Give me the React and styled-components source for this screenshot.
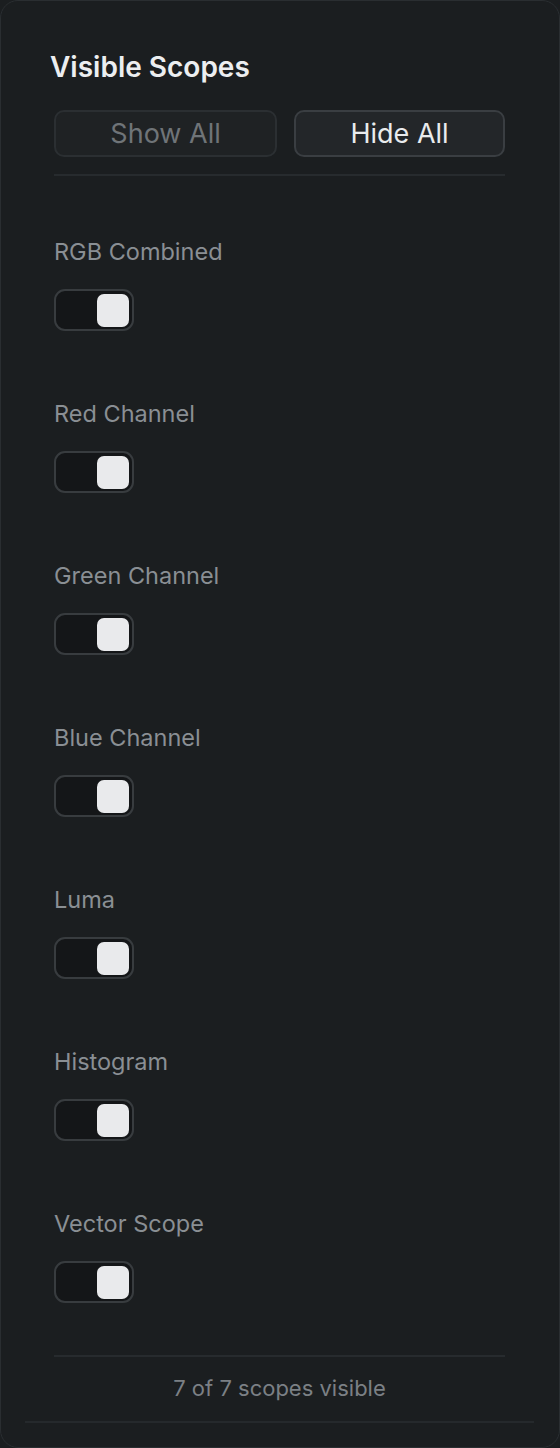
import React, { useState } from 'react';
import styled, { createGlobalStyle } from 'styled-components';

const GlobalStyle = createGlobalStyle`
  * { box-sizing: border-box; }
  html, body { margin: 0; padding: 0; background: #1b1e20; }
  body { font-family: Inter, "Noto Sans", "Liberation Sans", sans-serif; }
`;

const Panel = styled.div`
  width: 560px;
  height: 1448px;
  background: #1b1e20;
  border: 1px solid #2a2e31;
  border-radius: 18px;
  padding: 0 25px 0 24px;
  display: flex;
  flex-direction: column;
`;

const Section = styled.div`
  padding: 48px 29px 19px;
  border-bottom: 2px solid #25292c;
`;

const Title = styled.h2`
  margin: 0 0 25px -4px;
  font-size: 28px;
  line-height: 36px;
  font-weight: 600;
  color: #eceef0;
`;

const ButtonRow = styled.div`
  display: flex;
  gap: 17px;
  padding-bottom: 17px;
  border-bottom: 2px solid #272b2e;
`;

const ActionButton = styled.button`
  flex: 1 1 auto;
  height: 47px;
  padding: 0;
  border-radius: 10px;
  font-family: inherit;
  font-size: 27px;
  font-weight: 400;
  cursor: pointer;
  background: ${p => (p.$muted ? '#1f2224' : '#232629')};
  border: 2px solid ${p => (p.$muted ? '#2b2f32' : '#3a3e42')};
  color: ${p => (p.$muted ? '#6f7478' : '#e9ebed')};
`;

const List = styled.div`
  display: flex;
  flex-direction: column;
  gap: 67px;
  padding: 60px 0 52px;
  border-bottom: 2px solid #272b2e;
`;

const Item = styled.div`
  display: flex;
  flex-direction: column;
  align-items: flex-start;
  gap: 21px;
`;

const Label = styled.div`
  font-size: 23.5px;
  line-height: 32px;
  color: #8a8f94;
`;

const Track = styled.button`
  width: 80px;
  height: 42px;
  padding: 0 3px;
  border-radius: 11px;
  border: 2px solid #383c3f;
  background: #141618;
  display: flex;
  align-items: center;
  justify-content: ${p => (p.$on ? 'flex-end' : 'flex-start')};
  cursor: pointer;
`;

const Knob = styled.span`
  width: 32px;
  height: 33px;
  border-radius: 7px;
  background: ${p => (p.$on ? '#e9eaec' : '#5a5e62')};
`;

const Footer = styled.div`
  padding-top: 17px;
  text-align: center;
  font-size: 22px;
  line-height: 28px;
  color: #7b8085;
`;

const scopes = [
  'RGB Combined',
  'Red Channel',
  'Green Channel',
  'Blue Channel',
  'Luma',
  'Histogram',
  'Vector Scope',
];

export default function App() {
  const [visible, setVisible] = useState(() => scopes.map(() => true));
  const count = visible.filter(Boolean).length;

  const toggle = i => setVisible(v => v.map((on, j) => (j === i ? !on : on)));

  return (
    <>
      <GlobalStyle />
      <Panel>
        <Section>
          <Title>Visible Scopes</Title>
          <ButtonRow>
            <ActionButton $muted={count === scopes.length} onClick={() => setVisible(scopes.map(() => true))}>
              Show All
            </ActionButton>
            <ActionButton $muted={count === 0} onClick={() => setVisible(scopes.map(() => false))}>
              Hide All
            </ActionButton>
          </ButtonRow>
          <List>
            {scopes.map((name, i) => (
              <Item key={name}>
                <Label>{name}</Label>
                <Track $on={visible[i]} onClick={() => toggle(i)} aria-label={name}>
                  <Knob $on={visible[i]} />
                </Track>
              </Item>
            ))}
          </List>
          <Footer>
            {count} of {scopes.length} scopes visible
          </Footer>
        </Section>
      </Panel>
    </>
  );
}
